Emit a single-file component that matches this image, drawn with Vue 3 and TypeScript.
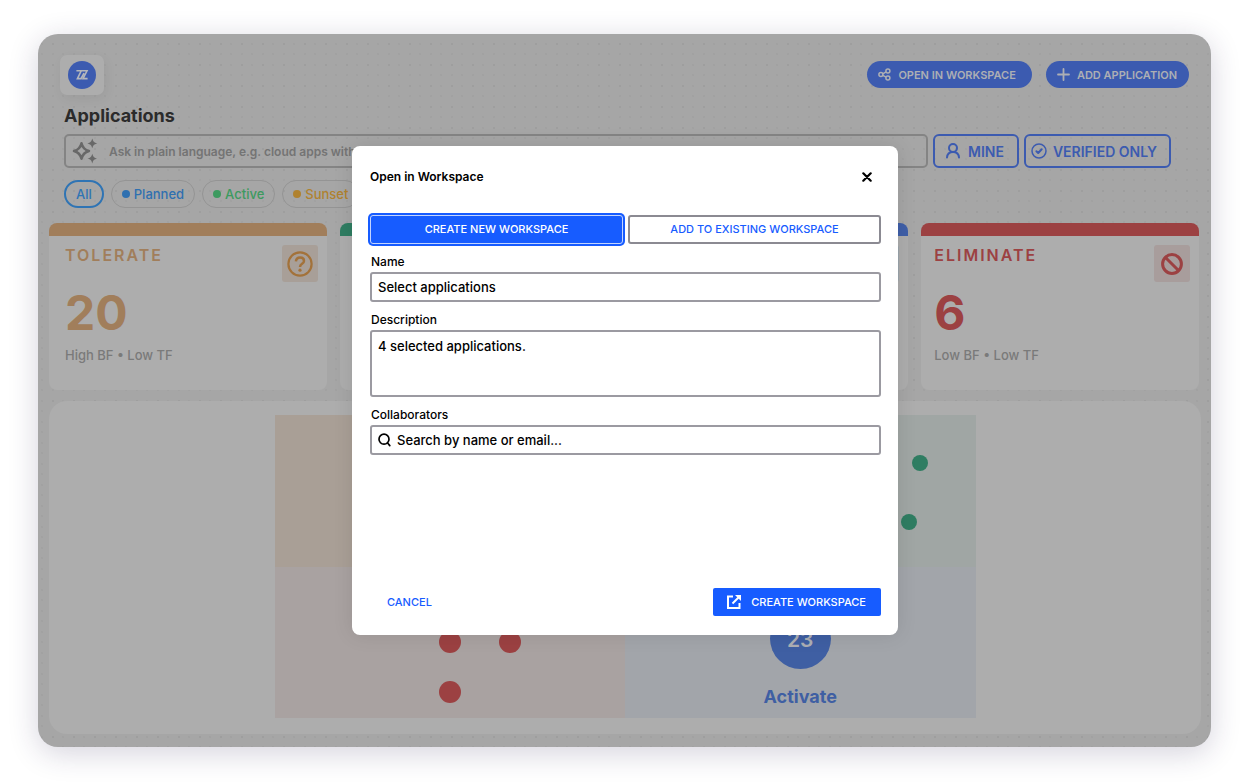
<script setup lang="ts">
import { ref } from 'vue'

interface Status { label: string; tone: string }
interface Disposition { title: string; tone: string; count: number; note: string; icon: string }
interface Point { x: number; y: number; size: number; tone: string }

const statuses: Status[] = [
  { label: 'Planned', tone: 'planned' },
  { label: 'Active', tone: 'active' },
  { label: 'Sunset', tone: 'sunset' },
]

const dispositions: Disposition[] = [
  { title: 'TOLERATE', tone: 'orange', count: 20, note: 'High BF • Low TF', icon: 'question' },
  { title: '', tone: 'green', count: 0, note: '', icon: '' },
  { title: '', tone: 'blue', count: 0, note: '', icon: 'plain' },
  { title: 'ELIMINATE', tone: 'red', count: 6, note: 'Low BF • Low TF', icon: 'ban' },
]

const points: Point[] = [
  { x: 645, y: 48, size: 16, tone: 'green' },
  { x: 634, y: 107, size: 16, tone: 'green' },
  { x: 175, y: 227, size: 22, tone: 'red' },
  { x: 235, y: 227, size: 22, tone: 'red' },
  { x: 175, y: 277, size: 22, tone: 'red' },
]

const query = ref('')
const name = ref('Select applications')
const description = ref('4 selected applications.')
const collaborator = ref('')
</script>

<template>
  <div class="stage">
    <main class="window">
      <header class="top">
        <div class="logo">
          <svg width="28" height="28" viewBox="0 0 28 28">
            <circle cx="14" cy="14" r="14" fill="#3c5bb0" />
            <path d="M8.400 9.800H13.200L9.400 17.600H13L16 12.200M13.800 9.800H19L15 17.600H19.600" fill="none" stroke="#b4b6bb" stroke-width="1.600" />
          </svg>
        </div>
        <div class="actions">
          <button class="pill" type="button">
            <svg width="13" height="13" viewBox="0 0 13 13" fill="none" stroke="currentColor" stroke-width="1.5">
              <circle cx="2.9" cy="6.6" r="2" /><circle cx="9.9" cy="2.9" r="2" /><circle cx="9.9" cy="10" r="2" />
              <path d="M4.8 5.8L8.1 3.8M4.8 7.4L8.1 9.2" />
            </svg>
            OPEN IN WORKSPACE
          </button>
          <button class="pill" type="button">
            <svg width="13" height="13" viewBox="0 0 13 13" fill="none" stroke="currentColor" stroke-width="1.8" stroke-linecap="round">
              <path d="M6.5 1V12M1 6.5H12" />
            </svg>
            ADD APPLICATION
          </button>
        </div>
      </header>

      <h1>Applications</h1>

      <div class="tools">
        <div class="ask">
          <svg width="26" height="26" viewBox="0 0 26 26">
            <path d="M9.500 5.200C10.500 9.500 12.500 11.800 17 13C12.500 14.200 10.500 16.500 9.500 20.800C8.500 16.500 6.500 14.200 2 13C6.500 11.800 8.500 9.500 9.500 5.200Z" fill="none" stroke="#686868" stroke-width="2.500" stroke-linejoin="round" />
            <path d="M20.300 0.600C21.300 3.900 22 4.500 25.200 5.400C22 6.300 21.300 6.900 20.300 10.200C19.300 6.900 18.600 6.300 15.400 5.400C18.600 4.500 19.300 3.900 20.300 0.600ZM20.300 15.800C21.300 19.100 22 19.700 25.200 20.600C22 21.500 21.300 22.100 20.300 25.400C19.300 22.100 18.600 21.500 15.400 20.600C18.600 19.700 19.300 19.100 20.300 15.800Z" fill="#686868" />
          </svg>
          <input v-model="query" type="text" aria-label="Ask about applications" placeholder="Ask in plain language, e.g. cloud apps with high risk" />
        </div>
        <button class="filter mine" type="button">
          <svg width="16" height="18" viewBox="0 0 16 18" fill="none" stroke="currentColor" stroke-width="2" stroke-linecap="round">
            <circle cx="8" cy="6" r="4" /><path d="M2 15.5C2.3 12 4.4 10 8 10C11.600 10 13.700 12 14 15.500" />
          </svg>
          MINE
        </button>
        <button class="filter verified" type="button">
          <svg width="16" height="16" viewBox="0 0 16 16" fill="none" stroke="currentColor" stroke-linecap="round" stroke-linejoin="round">
            <circle cx="8" cy="8" r="7" stroke-width="1.5" /><path d="M5.400 8.200L7.200 10L10.700 6.300" stroke-width="2" />
          </svg>
          VERIFIED ONLY
        </button>
      </div>

      <nav class="chips" aria-label="Status">
        <button class="chip all" type="button">All</button>
        <button v-for="s in statuses" :key="s.label" class="chip" :class="s.tone" type="button">
          <i></i><span>{{ s.label }}</span>
        </button>
      </nav>

      <section class="cards">
        <article v-for="d in dispositions" :key="d.tone" class="card" :class="d.tone">
          <div v-if="d.title">
            <h2>{{ d.title }}</h2>
            <strong>{{ d.count }}</strong>
            <p>{{ d.note }}</p>
          </div>
          <span v-if="d.icon" class="badge">
            <svg v-if="d.icon === 'question'" width="26" height="26" viewBox="0 0 26 26" fill="none" stroke="currentColor">
              <circle cx="13" cy="13" r="11.600" stroke-width="2.200" />
              <path d="M8.900 10.300C9.200 7.900 10.800 6.500 13.100 6.500C15.400 6.500 17 7.900 17 9.900C17 12.900 13 12.800 13 16" stroke-width="2.500" />
              <circle cx="13" cy="19.200" r="1.600" fill="currentColor" stroke="none" />
            </svg>
            <svg v-else-if="d.icon === 'ban'" width="22" height="22" viewBox="0 0 22 22" fill="none" stroke="currentColor" stroke-width="3">
              <circle cx="11" cy="11" r="9.400" /><path d="M4.500 4.500L17.500 17.500" />
            </svg>
          </span>
        </article>
      </section>

      <section class="panel">
        <div class="map">
          <div class="q tolerate"></div>
          <div class="q invest"></div>
          <div class="q eliminate"></div>
          <div class="q activate"><b>23</b><span>Activate</span></div>
          <i v-for="(p, n) in points" :key="n" class="point" :class="p.tone"
            :style="{ left: p.x + 'px', top: p.y + 'px', width: p.size + 'px', height: p.size + 'px' }"></i>
        </div>
      </section>
    </main>

    <div class="overlay">
      <form class="dialog" role="dialog" aria-labelledby="dialog-title" @submit.prevent>
        <div class="head">
          <h2 id="dialog-title">Open in Workspace</h2>
          <button type="button" aria-label="Close">
            <svg width="10" height="10" viewBox="0 0 10 10" stroke="#000" stroke-width="2.200" stroke-linecap="round">
              <path d="M1.300 1.300L8.700 8.700M8.700 1.300L1.300 8.700" />
            </svg>
          </button>
        </div>
        <div class="tabs">
          <button class="tab current" type="button">CREATE NEW WORKSPACE</button>
          <button class="tab" type="button">ADD TO EXISTING WORKSPACE</button>
        </div>
        <label for="ws-name">Name</label>
        <input id="ws-name" v-model="name" class="field" type="text" />
        <label for="ws-desc">Description</label>
        <textarea id="ws-desc" v-model="description" class="field"></textarea>
        <label for="ws-people">Collaborators</label>
        <div class="field search">
          <svg width="13" height="14" viewBox="0 0 13 14" fill="none" stroke="#000" stroke-width="1.700" stroke-linecap="round">
            <circle cx="6" cy="6.200" r="5" /><path d="M9.600 10L11.800 12.600" />
          </svg>
          <input id="ws-people" v-model="collaborator" type="text" placeholder="Search by name or email..." />
        </div>
        <div class="foot">
          <button class="cancel" type="button">CANCEL</button>
          <button class="create" type="submit">
            <svg width="14" height="14" viewBox="0 0 14 14" fill="none" stroke="#fff" stroke-width="2">
              <path d="M6 1.500H1V13H12.500V8" /><path d="M5.500 8.500L12 2" /><path d="M8 0H14V6Z" fill="#fff" stroke="none" />
            </svg>
            CREATE WORKSPACE
          </button>
        </div>
      </form>
    </div>
  </div>
</template>

<style>
body {
  margin: 0;
  background: #fff;
}
</style>

<style scoped>
* {
  box-sizing: border-box;
}

.stage {
  position: relative;
  display: flex;
  min-height: 100vh;
  padding: 34px 39px 35px 38px;
  font-family: Inter, "Liberation Sans", sans-serif;
}

button,
input,
textarea {
  margin: 0;
  padding: 0;
  border: 0;
  background: none;
  font: inherit;
  color: inherit;
}

button {
  display: flex;
  align-items: center;
  justify-content: center;
  white-space: nowrap;
}

h1,
h2,
p {
  margin: 0;
}

svg {
  flex: none;
}

.window {
  flex: 1;
  min-width: 0;
  display: flex;
  flex-direction: column;
  padding: 21px 10px 13px 11px;
  border-radius: 20px;
  background-color: #a6a6a6;
  background-image:
    radial-gradient(circle at 15px 10px, #8c8c8c 0, transparent 1px),
    radial-gradient(circle at 4px 10px, #989898 0, transparent 1px),
    radial-gradient(circle at 15px 20px, #989898 0, transparent 1px),
    radial-gradient(circle at 4px 20px, #989898 0, transparent 1px);
  background-size: 21px 21px;
  box-shadow: 0 6px 30px rgba(40, 30, 80, 0.2);
}

.top {
  display: flex;
  justify-content: space-between;
  padding: 0 12px 0 11px;
}

.logo {
  display: flex;
  align-items: center;
  justify-content: center;
  width: 44px;
  height: 40px;
  border-radius: 7px;
  background: #adadad;
  box-shadow: 2px 4px 12px rgba(0, 0, 0, 0.06);
}

.actions {
  display: flex;
  gap: 14px;
  padding-top: 6px;
}

.pill {
  gap: 7px;
  height: 27px;
  padding: 0 16px 0 11px;
  border-radius: 14px;
  background: #3c5bb0;
  color: #adafb4;
  font-size: 11px;
  font-weight: 600;
}

.pill + .pill {
  padding: 0 12px 0 11px;
}

h1 {
  margin: 10px 0 7px 15px;
  font-size: 18px;
  font-weight: 700;
  line-height: 22px;
  color: #2b2b2b;
}

.tools {
  display: flex;
  gap: 5px;
  padding: 0 30px 0 15px;
}

.ask {
  flex: 1;
  display: flex;
  align-items: center;
  gap: 11px;
  height: 34px;
  padding: 0 6px;
  border: 2px solid #848484;
  border-radius: 5px;
}

.ask input {
  flex: 1;
  min-width: 0;
  font-size: 12px;
  font-weight: 600;
}

.ask input::placeholder {
  color: #747474;
  opacity: 1;
}

.filter {
  height: 34px;
  border: 2px solid #3c5bb0;
  border-radius: 6px;
  color: #3c5bb0;
  font-size: 14px;
  font-weight: 600;
}

.mine {
  width: 86px;
  gap: 7px;
  padding-right: 3px;
}

.verified {
  width: 147px;
  gap: 6px;
  padding-right: 7px;
}

.chips {
  display: flex;
  gap: 7px;
  margin: 12px 0 15px 15px;
}

.chip {
  gap: 4px;
  height: 28px;
  padding: 0 10px;
  border: 1px solid #949494;
  border-radius: 14px;
  font-size: 13px;
  font-weight: 500;
}

.chip i {
  width: 8px;
  height: 8px;
  border-radius: 50%;
  background: currentColor;
}

.all {
  border: 2px solid #2f74b4;
  color: #2f74b4;
}

.planned {
  color: #2f70b0;
}

.active {
  color: #3d9a5f;
}

.sunset {
  color: #b0822f;
}

.cards {
  display: grid;
  grid-template-columns: repeat(4, 1fr);
  gap: 13px;
  padding-right: 2px;
}

.card {
  display: flex;
  justify-content: space-between;
  min-height: 167px;
  padding: 9px 9px 0 16px;
  border-top: 13px solid currentColor;
  border-radius: 8px;
  background: #adadad;
}

.card.orange {
  color: #a17e5b;
}

.card.green {
  color: #2f7d62;
}

.card.blue {
  color: #3f5fa8;
}

.card.red {
  padding-left: 13px;
  color: #9c4142;
}

.card h2 {
  font-size: 16px;
  font-weight: 600;
  line-height: 20px;
  letter-spacing: 2px;
}

.card strong {
  display: block;
  margin-top: 18px;
  font-size: 48px;
  font-weight: 700;
  line-height: 60px;
}

.card p {
  margin-top: 2px;
  font-size: 13px;
  font-weight: 500;
  line-height: 20px;
  color: #7a7a7a;
}

.badge {
  display: flex;
  align-items: center;
  justify-content: center;
  margin-left: auto;
  width: 36px;
  height: 37px;
  border-radius: 3px;
}

.orange .badge {
  background: #a89f98;
  color: #a3723a;
}

.red .badge {
  background: #a89d9c;
}

.blue .badge {
  background: #9ca5ad;
}

.panel {
  flex: 1;
  margin-top: 11px;
  padding: 14px 0 16px;
  border-radius: 18px;
  background: #adadad;
}

.map {
  position: relative;
  display: grid;
  grid-template-columns: 1fr 1fr;
  grid-template-rows: 1fr 1fr;
  width: 701px;
  max-width: 100%;
  height: 100%;
  min-height: 303px;
  margin: 0 auto;
}

.tolerate {
  background: #a99f96;
}

.invest {
  background: #a0a6a4;
}

.eliminate {
  background: #a9a2a1;
}

.activate {
  display: flex;
  flex-direction: column;
  align-items: center;
  gap: 16px;
  padding-top: 41px;
  background: #a2a5aa;
  color: #3f5fa3;
  font-size: 18px;
  font-weight: 700;
  line-height: 24px;
}

.activate b {
  width: 61px;
  height: 61px;
  border-radius: 50%;
  background: #3f5fa3;
  color: #adafb4;
  font-size: 21px;
  font-weight: 600;
  line-height: 64px;
  text-align: center;
}

.point {
  position: absolute;
  border-radius: 50%;
  transform: translate(-50%, -50%);
}

.point.green {
  background: #2f7d62;
}

.point.red {
  background: #9c4142;
}

.overlay {
  position: absolute;
  inset: 0;
  display: flex;
  align-items: center;
  justify-content: center;
  padding-bottom: 2px;
}

.dialog {
  display: flex;
  flex-direction: column;
  width: 546px;
  max-width: 100%;
  padding: 20px 17px 19px 18px;
  border-radius: 8px;
  background: #fff;
  box-shadow: 0 0 20px rgba(0, 0, 0, 0.1);
  color: #000;
  font-size: 13px;
  font-weight: 500;
}

.head {
  display: flex;
  align-items: center;
  justify-content: space-between;
  height: 22px;
  padding-right: 9px;
}

.head h2 {
  font-size: 12px;
  font-weight: 600;
}

.tabs {
  display: grid;
  grid-template-columns: 1fr 1fr;
  gap: 5px;
  margin: 27px 0 8px;
}

.tab {
  height: 29px;
  border: 2px solid #8b8a92;
  border-radius: 3px;
  color: #175cff;
  font-size: 11px;
}

.current {
  border: 1px solid #c3d4ff;
  background: #175cff;
  color: #fff;
  box-shadow: 0 0 0 2px #175cff;
}

label {
  padding-left: 1px;
  font-size: 12px;
  line-height: 20px;
}

.field {
  width: 100%;
  height: 30px;
  margin-bottom: 8px;
  padding: 0 6px;
  border: 2px solid #9b9aa1;
  border-radius: 3px;
}

textarea.field {
  display: block;
  height: 67px;
  padding-top: 6px;
  line-height: 16px;
  resize: none;
}

.search {
  display: flex;
  align-items: center;
  gap: 6px;
}

.search input {
  flex: 1;
}

.search input::placeholder {
  color: #000;
  opacity: 1;
}

.foot {
  display: flex;
  align-items: center;
  justify-content: space-between;
  margin-top: 125px;
  font-size: 11px;
}

.cancel {
  padding: 0 17px;
  color: #175cff;
}

.create {
  gap: 10px;
  height: 28px;
  padding: 0 15px 0 14px;
  border-radius: 2px;
  background: #175cff;
  color: #fff;
}
</style>
